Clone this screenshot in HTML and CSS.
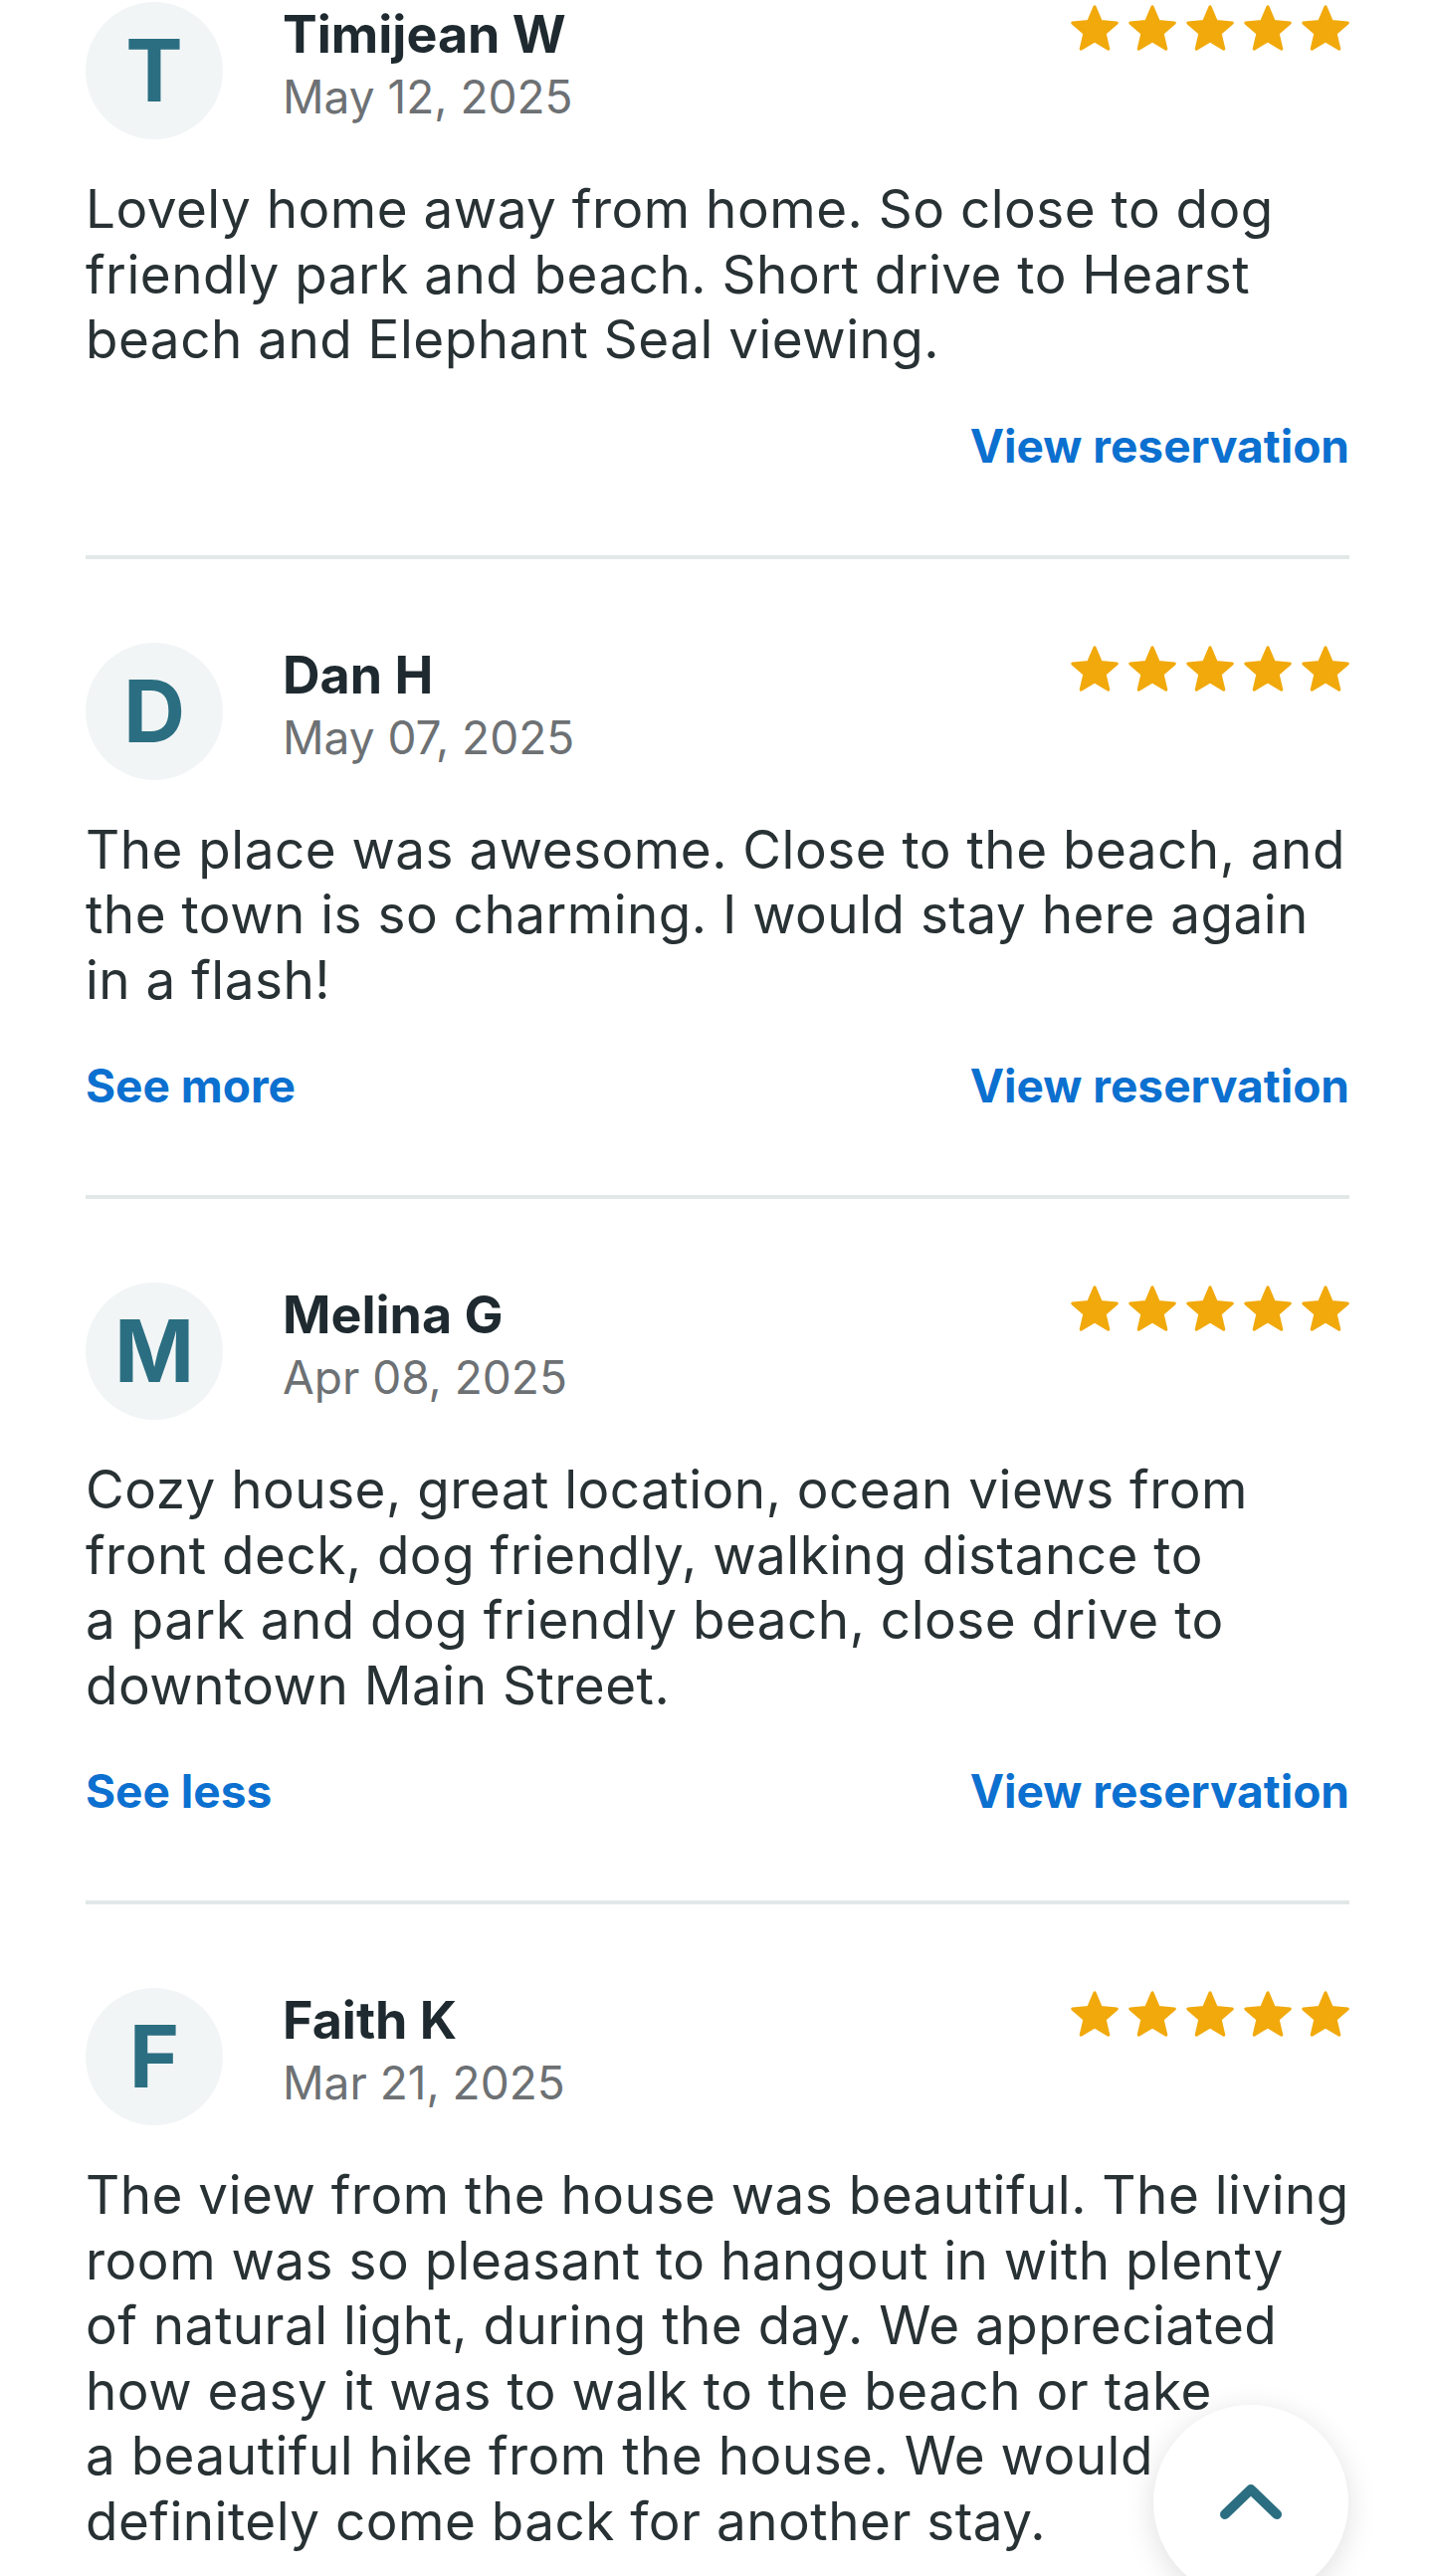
FILE: index.html
```html
<!DOCTYPE html>
<html>
<head>
    <meta charset="utf-8">
    <meta name="viewport" content="width=device-width, initial-scale=1.0">
    <title>Reviews</title>
    <link rel="stylesheet" href="styles.css">
</head>
<body>
    <svg width="0" height="0" class="defs">
        <symbol id="star" viewBox="1.2 1.2 21.6 20.6">
            <path d="M12 17.27L18.18 21l-1.64-7.03L22 9.24l-7.19-.61L12 2 9.19 8.63 2 9.24l5.46 4.73L5.82 21z" stroke="currentColor" stroke-width="1.4" stroke-linejoin="round"/>
        </symbol>
    </svg>

    <div id="reviews">
        <div class="review first">
            <div class="review-head">
                <div class="avatar">T</div>
                <div class="who">
                    <div class="name">Timijean W</div>
                    <div class="date">May 12, 2025</div>
                </div>
                <div class="stars">
                    <svg><use href="#star"/></svg><svg><use href="#star"/></svg><svg><use href="#star"/></svg><svg><use href="#star"/></svg><svg><use href="#star"/></svg>
                </div>
            </div>
            <p class="review-text">Lovely home away from home. So close to dog<br>friendly park and beach. Short drive to Hearst<br>beach and Elephant Seal viewing.</p>
            <div class="actions">
                <a href="#" class="view-link">View reservation</a>
            </div>
        </div>

        <div class="review">
            <div class="review-head">
                <div class="avatar">D</div>
                <div class="who">
                    <div class="name">Dan H</div>
                    <div class="date">May 07, 2025</div>
                </div>
                <div class="stars">
                    <svg><use href="#star"/></svg><svg><use href="#star"/></svg><svg><use href="#star"/></svg><svg><use href="#star"/></svg><svg><use href="#star"/></svg>
                </div>
            </div>
            <p class="review-text">The place was awesome. Close to the beach, and<br>the town is so charming. I would stay here again<br>in a flash!</p>
            <div class="actions">
                <a href="#">See more</a>
                <a href="#" class="view-link">View reservation</a>
            </div>
        </div>

        <div class="review">
            <div class="review-head">
                <div class="avatar">M</div>
                <div class="who">
                    <div class="name">Melina G</div>
                    <div class="date">Apr 08, 2025</div>
                </div>
                <div class="stars">
                    <svg><use href="#star"/></svg><svg><use href="#star"/></svg><svg><use href="#star"/></svg><svg><use href="#star"/></svg><svg><use href="#star"/></svg>
                </div>
            </div>
            <p class="review-text">Cozy house, great location, ocean views from<br>front deck, dog friendly, walking distance to<br>a park and dog friendly beach, close drive to<br>downtown Main Street.</p>
            <div class="actions">
                <a href="#">See less</a>
                <a href="#" class="view-link">View reservation</a>
            </div>
        </div>

        <div class="review">
            <div class="review-head">
                <div class="avatar">F</div>
                <div class="who">
                    <div class="name">Faith K</div>
                    <div class="date">Mar 21, 2025</div>
                </div>
                <div class="stars">
                    <svg><use href="#star"/></svg><svg><use href="#star"/></svg><svg><use href="#star"/></svg><svg><use href="#star"/></svg><svg><use href="#star"/></svg>
                </div>
            </div>
            <p class="review-text">The view from the house was beautiful. The living<br>room was so pleasant to hangout in with plenty<br>of natural light, during the day. We appreciated<br>how easy it was to walk to the beach or take<br>a beautiful hike from the house. We would<br>definitely come back for another stay.</p>
        </div>
    </div>

    <button id="scroll-top" title="Back to top">
        <svg viewBox="0 0 70 40" width="70" height="40"><path d="M9 32 L35 7 L61 32" fill="none" stroke="currentColor" stroke-width="10" stroke-linecap="round" stroke-linejoin="round"/></svg>
    </button>
</body>
</html>
```

FILE: styles.css
```css
body {
    margin: 0;
    background: #fff;
    font-family: Inter, "Noto Sans", sans-serif;
    color: #283134;
}
.defs { position: absolute; }

#reviews { padding: 0 84px 0 86px; }

.review {
    padding: 84px 0 80px;
    border-bottom: 4px solid #e2e8e8;
}
.review.first { padding-top: 2px; }
.review:last-child { border-bottom: none; }

.review-head { display: flex; align-items: flex-start; }
.avatar {
    width: 138px;
    height: 138px;
    flex-shrink: 0;
    border-radius: 50%;
    background-color: #f2f5f6;
    color: #2b6e81;
    font-size: 86px;
    font-weight: 700;
    display: flex;
    align-items: center;
    justify-content: center;
}
.who { margin-left: 60px; padding-top: 2px; }
.name { font-size: 52px; font-weight: 700; line-height: 62px; color: #1e2a2f; }
.date { font-size: 46px; line-height: 62px; color: #6d7174; }

.stars { margin-left: auto; display: flex; gap: 10px; margin-top: 3px; color: #f1a90b; }
.stars svg { width: 48px; height: 46px; fill: currentColor; }

.review-text {
    margin: 38px 0 0;
    font-size: 53px;
    letter-spacing: 0.5px;
    line-height: 65.5px;
}

.actions { display: flex; justify-content: space-between; margin-top: 43px; line-height: 60px; }
.actions a {
    font-size: 46px;
    font-weight: 700;
    color: #0b70cf;
    text-decoration: none;
}
.actions .view-link { margin-left: auto; }

#scroll-top {
    position: fixed;
    right: 85px;
    bottom: -24px;
    width: 196px;
    height: 196px;
    border: none;
    border-radius: 50%;
    background: #fff;
    color: #2b6e81;
    box-shadow: 0 6px 30px rgba(0, 0, 0, 0.13);
    display: flex;
    align-items: center;
    justify-content: center;
    cursor: pointer;
    padding: 0;
}
```
